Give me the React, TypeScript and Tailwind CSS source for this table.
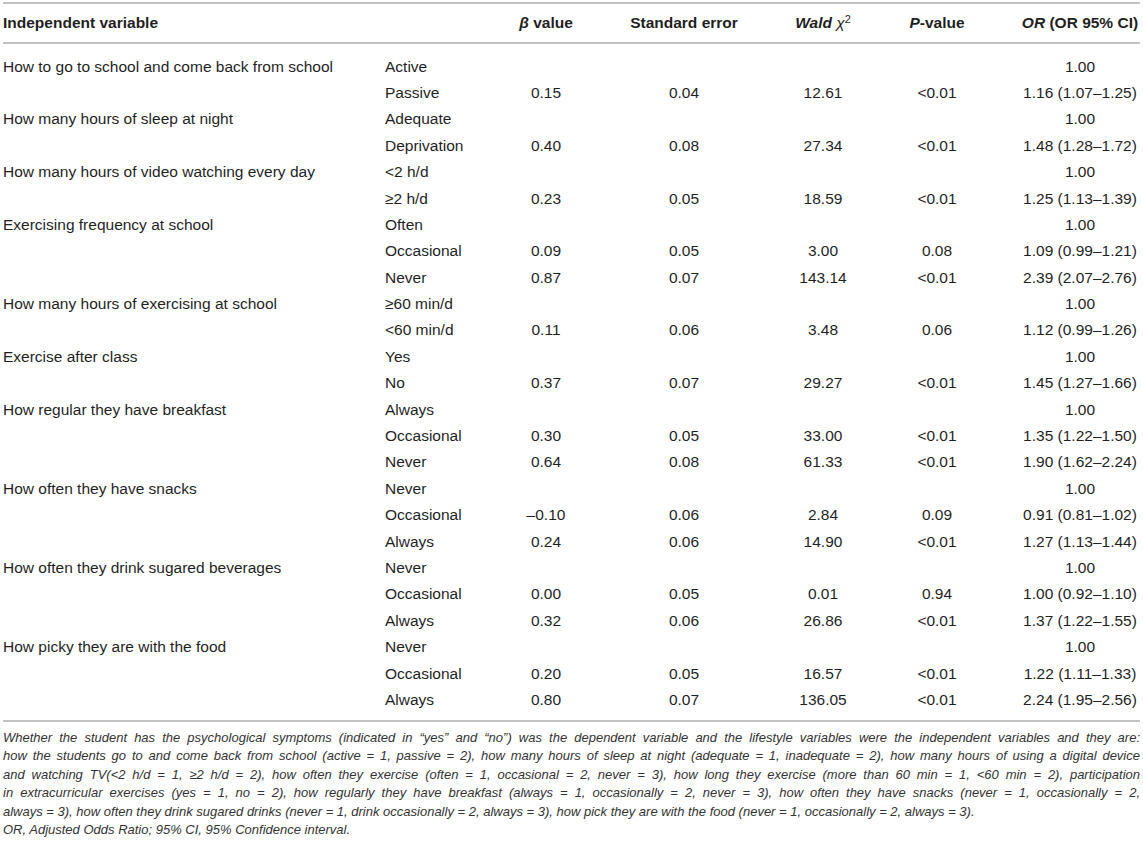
type Row = [string, string, string, string, string, string, string];

const ROWS: Row[] = [
  ["How to go to school and come back from school", "Active", "", "", "", "", "1.00"],
  ["", "Passive", "0.15", "0.04", "12.61", "<0.01", "1.16 (1.07–1.25)"],
  ["How many hours of sleep at night", "Adequate", "", "", "", "", "1.00"],
  ["", "Deprivation", "0.40", "0.08", "27.34", "<0.01", "1.48 (1.28–1.72)"],
  ["How many hours of video watching every day", "<2 h/d", "", "", "", "", "1.00"],
  ["", "≥2 h/d", "0.23", "0.05", "18.59", "<0.01", "1.25 (1.13–1.39)"],
  ["Exercising frequency at school", "Often", "", "", "", "", "1.00"],
  ["", "Occasional", "0.09", "0.05", "3.00", "0.08", "1.09 (0.99–1.21)"],
  ["", "Never", "0.87", "0.07", "143.14", "<0.01", "2.39 (2.07–2.76)"],
  ["How many hours of exercising at school", "≥60 min/d", "", "", "", "", "1.00"],
  ["", "<60 min/d", "0.11", "0.06", "3.48", "0.06", "1.12 (0.99–1.26)"],
  ["Exercise after class", "Yes", "", "", "", "", "1.00"],
  ["", "No", "0.37", "0.07", "29.27", "<0.01", "1.45 (1.27–1.66)"],
  ["How regular they have breakfast", "Always", "", "", "", "", "1.00"],
  ["", "Occasional", "0.30", "0.05", "33.00", "<0.01", "1.35 (1.22–1.50)"],
  ["", "Never", "0.64", "0.08", "61.33", "<0.01", "1.90 (1.62–2.24)"],
  ["How often they have snacks", "Never", "", "", "", "", "1.00"],
  ["", "Occasional", "–0.10", "0.06", "2.84", "0.09", "0.91 (0.81–1.02)"],
  ["", "Always", "0.24", "0.06", "14.90", "<0.01", "1.27 (1.13–1.44)"],
  ["How often they drink sugared beverages", "Never", "", "", "", "", "1.00"],
  ["", "Occasional", "0.00", "0.05", "0.01", "0.94", "1.00 (0.92–1.10)"],
  ["", "Always", "0.32", "0.06", "26.86", "<0.01", "1.37 (1.22–1.55)"],
  ["How picky they are with the food", "Never", "", "", "", "", "1.00"],
  ["", "Occasional", "0.20", "0.05", "16.57", "<0.01", "1.22 (1.11–1.33)"],
  ["", "Always", "0.80", "0.07", "136.05", "<0.01", "2.24 (1.95–2.56)"],
];

const NOTE_LINES = [
  "Whether the student has the psychological symptoms (indicated in “yes” and “no”) was the dependent variable and the lifestyle variables were the independent variables and they are:",
  "how the students go to and come back from school (active = 1, passive = 2), how many hours of sleep at night (adequate = 1, inadequate = 2), how many hours of using a digital device",
  "and watching TV(<2 h/d = 1, ≥2 h/d = 2), how often they exercise (often = 1, occasional = 2, never = 3), how long they exercise (more than 60 min = 1, <60 min = 2), participation",
  "in extracurricular exercises (yes = 1, no = 2), how regularly they have breakfast (always = 1, occasionally = 2, never = 3), how often they have snacks (never = 1, occasionally = 2,",
];

const GRID = "grid grid-cols-[382px_131px_60px_216px_62px_166px_120px]";

function Center({ children }: { children: React.ReactNode }) {
  return <div className="flex justify-center whitespace-nowrap">{children}</div>;
}

export default function App() {
  return (
    <div
      className="w-[1143px] bg-white pl-[3px] pr-[3px] pt-[2px] text-[#1f1f1f]"
      style={{ fontFamily: '"Liberation Sans", Arial, sans-serif' }}
    >
      <div className="border-t-2 border-b-2 border-[#c2c2c2]">
        <div className={`${GRID} h-[38px] items-center text-[15.5px] font-bold`}>
          <div>Independent variable</div>
          <div />
          <Center>
            <span>
              <i>β</i> value
            </span>
          </Center>
          <Center>Standard error</Center>
          <Center>
            <span>
              <i>Wald</i> <i className="font-normal">χ</i>
              <sup className="text-[11px] font-normal">2</sup>
            </span>
          </Center>
          <Center>
            <span>
              <i>P</i>-value
            </span>
          </Center>
          <Center>
            <span>
              <i>OR</i> (OR 95% CI)
            </span>
          </Center>
        </div>
      </div>

      <div className="border-b-2 border-[#c2c2c2] pt-[9px] pb-[7px] text-[15.5px]">
        {ROWS.map((r, i) => (
          <div key={i} className={`${GRID} h-[26.4px] items-center`}>
            <div className="whitespace-nowrap">{r[0]}</div>
            <div className="whitespace-nowrap">{r[1]}</div>
            <Center>{r[2]}</Center>
            <Center>{r[3]}</Center>
            <Center>{r[4]}</Center>
            <Center>{r[5]}</Center>
            <Center>{r[6]}</Center>
          </div>
        ))}
      </div>

      <div className="mt-[7px] text-[13px] italic leading-[18.5px] text-[#333]">
        {NOTE_LINES.map((l, i) => (
          <div key={i} className="text-justify whitespace-nowrap [text-align-last:justify]">
            {l}
          </div>
        ))}
        <div>
          always = 3), how often they drink sugared drinks (never = 1, drink occasionally = 2, always = 3), how pick
          they are with the food (never = 1, occasionally = 2, always = 3).
        </div>
        <div>OR, Adjusted Odds Ratio; 95% CI, 95% Confidence interval.</div>
      </div>
    </div>
  );
}
